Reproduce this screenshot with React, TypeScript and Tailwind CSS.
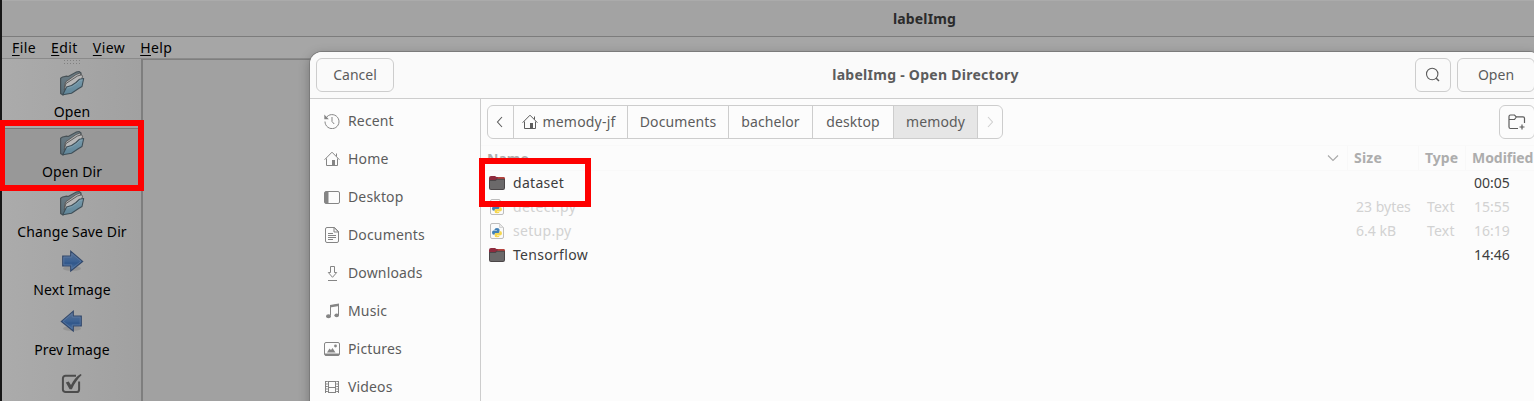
import type { ReactNode } from "react";

function Folder3D() {
  return (
    <svg width="26" height="26" viewBox="0 0 26 26" className="block">
      <defs>
        <linearGradient id="fback" x1="0" y1="0" x2="0" y2="1">
          <stop offset="0" stopColor="#6f7f87" />
          <stop offset="1" stopColor="#566b76" />
        </linearGradient>
        <linearGradient id="ffront" x1="0" y1="0" x2="0" y2="1">
          <stop offset="0" stopColor="#789aab" />
          <stop offset="1" stopColor="#5f8598" />
        </linearGradient>
      </defs>
      <path d="M1.600 23.500V8.200l2-1.200 4-.800 1.600.300L17 2.200l3-.700L22 3v10L4 25z" fill="url(#fback)" stroke="#485257" strokeWidth="1.200" strokeLinejoin="round" />
      <path d="M5.500 17l1-5L17 4.500l3.500-1.300 1.300 1-2.300 8z" fill="#b2b2b2" stroke="#555" strokeWidth=".9" />
      <path d="M5 20l2-6.500L18.500 6l4-1.200 1 1.400-1.500 6z" fill="#b8b8b8" stroke="#555" strokeWidth=".9" />
      <path d="M3.800 24.800L7.500 17l5-1.500 4.500-3 3.500-3.300 4.200-.700-1.700 8-3 1.800-7.500 4.900z" fill="url(#ffront)" stroke="#3f4f58" strokeWidth="1.100" strokeLinejoin="round" />
      <path d="M8.300 18l5-1.500 4.300-3 3.400-3.200 2.500-.400" fill="none" stroke="#8ca9b6" strokeWidth=".6" />
    </svg>
  );
}

function Arrow({ back }: { back?: boolean }) {
  return (
    <svg width="26" height="26" viewBox="0 0 26 26" className="block">
      <defs>
        <linearGradient id="arr" x1="0" y1="0" x2="0" y2="1">
          <stop offset="0" stopColor="#5a7090" />
          <stop offset=".5" stopColor="#3c6294" />
          <stop offset=".6" stopColor="#31578a" />
          <stop offset="1" stopColor="#4b76a8" />
        </linearGradient>
      </defs>
      <ellipse cx="13" cy="20.5" rx="9" ry="2.3" fill="#949494" />
      <g transform={back ? "matrix(-1 0 0 1 26 0)" : undefined}>
        <path d="M3.700 8h8V3.200L23.700 13.400 11.700 23v-5h-8z" fill="url(#arr)" stroke="#34496b" strokeWidth="1.100" />
        <path d="M4.800 9.100h8V5.600l9.200 7.800-9.200 7.200v-3.700h-8z" fill="none" stroke="#6480a6" strokeWidth=".6" />
      </g>
    </svg>
  );
}

function CheckIcon() {
  return (
    <svg width="26" height="26" viewBox="0 0 26 26" className="block">
      <path d="M17 4.800H6.500a2.600 2.600 0 0 0-2.600 2.600v11a2.600 2.600 0 0 0 2.600 2.600h11a2.600 2.600 0 0 0 2.600-2.600v-8" fill="none" stroke="#4c4c4c" strokeWidth="2" />
      <path d="M6.800 11.500l2.900-1 2.300 3.500C14.500 9 17.500 5.500 21.500 3l1.200 1.100C18.500 8 15.500 12.500 12.900 18.300h-2.300z" fill="#4c4c4c" />
    </svg>
  );
}

function ToolButton({ icon, label, size }: { icon: ReactNode; label: string; size: string }) {
  return (
    <div className={`flex w-full shrink-0 flex-col items-center ${size}`}>
      {icon}
      <div className="mt-[6px] h-5 whitespace-nowrap leading-5 tracking-[0.1px]">{label}</div>
    </div>
  );
}

function HomeIcon({ color }: { color: string }) {
  return (
    <svg width="16" height="16" viewBox="0 0 16 16" fill="none" stroke={color} className="block shrink-0">
      <path d="M.6 8.700L8 1.200l7.400 7.500M2.500 7.500v7h11v-7" />
      <path d="M12.500 2.500v3" />
      <path d="M8 14.500V9h3v5.500z" fill={color} stroke="none" />
    </svg>
  );
}

const G = "#858585";

const icons: Record<string, ReactNode> = {
  Recent: (
    <>
      <path d="M2 5A7 7 0 1 1 1 8.500" />
      <path d="M8 4v4.500l2.200 2.500" />
      <path d="M.3 1.500v4.800h4.500z" fill={G} stroke="none" />
    </>
  ),
  Desktop: (
    <>
      <rect x=".5" y="2.500" width="15" height="12" rx="1.500" />
      <path d="M1 3h3.500v11H1z" fill={G} stroke="none" />
    </>
  ),
  Documents: (
    <>
      <path d="M3 .5h7.500l4 4v9.500a1.500 1.500 0 0 1-1.500 1.500H3A1.500 1.500 0 0 1 1.500 14V2A1.500 1.500 0 0 1 3 .5z" />
      <path d="M10 .5V5h4.500zM4 6.500h5M4 8.500h8M4 10.500h8M4 12.500h5" />
    </>
  ),
  Downloads: <path d="M6.500 1.500h4v6h2.200L8.500 12.300 4.300 7.500h2.200zM4 15.500h9" />,
  Music: (
    <>
      <path d="M6.500 12.500V3l8-1.500v10.500" />
      <path d="M6 2l9-1.500V3L6 4.500z" fill={G} stroke="none" />
      <ellipse cx="4.500" cy="13.300" rx="2.500" ry="2" fill={G} stroke="none" />
      <ellipse cx="12.700" cy="12.300" rx="2.300" ry="1.900" fill={G} stroke="none" />
    </>
  ),
  Pictures: (
    <>
      <rect x=".5" y="1.500" width="15" height="13" rx="1.500" />
      <path d="M1 12.500h14v2H1zM3 11.500l2.500-4 1.500 1.500 1.500-2 3 4.500z" fill={G} stroke="none" />
      <circle cx="11.500" cy="5" r="1.400" fill={G} stroke="none" />
    </>
  ),
  Videos: (
    <>
      <path d="M4.500 2v12M11.500 2v12M4 2.500h8M4 8.500h8M4 13.500h8" />
      <path d="M1.500 2v12M14.500 2v12" />
      <path d="M2.800 2v12M13.200 2v12" strokeWidth="2" strokeDasharray="1 1.500" />
    </>
  ),
};

const places = ["Recent", "Home", "Desktop", "Documents", "Downloads", "Music", "Pictures", "Videos"];

function PlaceRow({ name }: { name: string }) {
  return (
    <div className="flex h-[38px] shrink-0 items-center gap-2 pl-[14px]">
      {name === "Home" ? (
        <HomeIcon color={G} />
      ) : (
        <svg width="16" height="16" viewBox="0 0 16 16" fill="none" stroke={G} className="block shrink-0">
          {icons[name]}
        </svg>
      )}
      <span className="pb-[2px] tracking-[0.15px]">{name}</span>
    </div>
  );
}

function DirIcon() {
  return (
    <svg width="16" height="16" viewBox="0 0 16 16" className="block shrink-0">
      <path d="M0 3a2 2 0 0 1 2-2h4l1.500 1H14a2 2 0 0 1 2 2v8H0z" fill="#8e2b3e" />
      <path d="M9 2h5a2 2 0 0 1 2 2v1H8z" fill="#b8433c" />
      <path d="M0 5.500Q0 5 .7 5h5.500l1.500-1.200H15a1 1 0 0 1 1 1V13a2 2 0 0 1-2 2H2a2 2 0 0 1-2-2z" fill="#4b4648" />
      <path d="M1 6h5.500L8 4.800h7V13a1 1 0 0 1-1 1H2a1 1 0 0 1-1-1z" fill="#6b696a" />
    </svg>
  );
}

function PyIcon() {
  return (
    <svg width="16" height="16" viewBox="0 0 16 16" className="block shrink-0">
      <path d="M3 .5h7.500l4 4V14a1.500 1.500 0 0 1-1.500 1.500H3A1.500 1.500 0 0 1 1.500 14V2A1.500 1.500 0 0 1 3 .5z" fill="#fafafa" stroke="#bdbdbd" />
      <path d="M10.500.5v4h4z" fill="#e8e8e8" stroke="#c8c8c8" strokeWidth=".7" />
      <path d="M5.500 6.500Q5.500 5 8 5t2.500 1.500V9Q10.500 10 9.500 10H7Q5.500 10 5.500 11.700 3 12 3 9.500T5.500 7.500H8V7H5.500z" fill="#4180b5" />
      <path d="M10.500 13Q10.500 14.300 8 14.300T5.700 13v-2Q5.700 10 7 10h2.500Q10.800 10 10.800 8q2.200 0 2.200 2.300T10.500 12.500H8v.5z" fill="#f6d750" />
    </svg>
  );
}

const files = [
  { name: "dataset", dir: true, size: "", type: "", time: "00:05" },
  { name: "detect.py", dir: false, size: "23 bytes", type: "Text", time: "15:55" },
  { name: "setup.py", dir: false, size: "6.4 kB", type: "Text", time: "16:19" },
  { name: "Tensorflow", dir: true, size: "", type: "", time: "14:46" },
];

function FileRow({ file }: { file: (typeof files)[number] }) {
  return (
    <div className={`flex h-6 items-center ${file.dir ? "text-[#3d3d3d]" : "text-[#d2d2d2]"}`}>
      <div className="flex w-[867px] items-center gap-2 pl-2">
        {file.dir ? <DirIcon /> : <PyIcon />}
        <span className="pb-[2px] tracking-[0.3px]">{file.name}</span>
      </div>
      <div className="w-[71px] whitespace-nowrap pb-[2px] pl-2">{file.size}</div>
      <div className="w-[47px] pb-[2px] pl-2 tracking-[0.2px]">{file.type}</div>
      <div className="pb-[2px] pl-2">{file.time}</div>
    </div>
  );
}

function Crumb({ children, size, active }: { children: ReactNode; size: string; active?: boolean }) {
  return (
    <div className={`flex items-center justify-center gap-1 border-r border-[#cdcdcd] tracking-[0.12px] ${size} ${active ? "bg-[#e6e6e6]" : ""}`}>
      {children}
    </div>
  );
}

function OpenDialog() {
  return (
    <div className="absolute left-[310px] top-[52px] flex h-[380px] w-[1231px] flex-col overflow-hidden rounded-t-[12px] bg-[#fcfcfc] text-[#5c5c5c] shadow-[0_0_0_1px_#7b7b7b,0_3px_12px_rgba(0,0,0,0.3)]">
      <div className="flex h-[47px] shrink-0 items-center justify-between border-b border-[#cdcdcd] bg-[#fafafa] px-[6px]">
        <div className="flex w-[120px]">
          <div className="flex h-[34px] w-[78px] items-center justify-center rounded-[6px] border border-[#cdcdcd] pb-[2px]">Cancel</div>
        </div>
        <div className="pb-[2px] font-bold tracking-[0.27px]">labelImg - Open Directory</div>
        <div className="flex w-[120px] gap-[6px]">
          <div className="flex h-[34px] w-9 items-center justify-center rounded-[6px] border border-[#cdcdcd]">
            <svg width="16" height="16" viewBox="0 0 16 16" fill="none" stroke="#5c5c5c" strokeWidth="1.100">
              <circle cx="7.200" cy="7" r="5.700" />
              <path d="M11 11l3 3" strokeWidth="1.500" />
            </svg>
          </div>
          <div className="flex h-[34px] w-[78px] items-center justify-center rounded-[6px] border border-[#cdcdcd] pb-[2px]">Open</div>
        </div>
      </div>
      <div className="flex min-h-0 grow">
        <div className="flex w-[171px] shrink-0 flex-col overflow-hidden border-r border-[#cdcdcd] pt-[3px]">
          {places.map((name) => (
            <PlaceRow key={name} name={name} />
          ))}
        </div>
        <div className="flex min-w-0 grow flex-col">
          <div className="flex h-[46px] shrink-0 items-center justify-between px-[6px]">
            <div className="flex h-[34px] overflow-hidden rounded-[6px] border border-[#cdcdcd]">
              <Crumb size="w-[26px] pr-[2px]">
                <svg width="8" height="12" viewBox="0 0 8 12" fill="none" stroke="#5c5c5c" strokeWidth="1.100">
                  <path d="M6 1L1.500 6 6 11" />
                </svg>
              </Crumb>
              <Crumb size="w-[114px] pr-[3px]">
                <HomeIcon color="#5c5c5c" />
                <span className="pb-[2px] tracking-[0.2px]">memody-jf</span>
              </Crumb>
              <Crumb size="w-[101px] pb-[2px]">Documents</Crumb>
              <Crumb size="w-[84px] pb-[2px]">bachelor</Crumb>
              <Crumb size="w-[81px] pb-[2px]">desktop</Crumb>
              <Crumb size="w-[84px] pb-[2px]" active>memody</Crumb>
              <div className="flex w-6 items-center justify-center">
                <svg width="8" height="12" viewBox="0 0 8 12" fill="none" stroke="#cfcfcf" strokeWidth="1.100">
                  <path d="M2 1l4.500 5L2 11" />
                </svg>
              </div>
            </div>
            <div className="flex h-[34px] w-9 items-center justify-center rounded-[6px] border border-[#cdcdcd]">
              <svg width="18" height="16" viewBox="0 0 18 16" fill="none" stroke="#5c5c5c" strokeWidth="1.200">
                <path d="M10 14.500H2.500A1.500 1.500 0 0 1 1 13V2.500A1.500 1.500 0 0 1 2.500 1h4L8.300 2.800H15a1.500 1.500 0 0 1 1.500 1.500V9M1 5.500h5.500L8.300 3M14 10.500v5M11.500 13h5" />
              </svg>
            </div>
          </div>
          <div className="flex h-[26px] shrink-0 items-center border-y border-[#f9f9f9] font-bold text-[#adadad]">
            <div className="flex h-full w-[867px] items-center justify-between border-r border-[#f8f8f8] pl-[6px] pr-2">
              <span>Name</span>
              <svg width="12" height="8" viewBox="0 0 12 8" fill="none" stroke="#a8a8a8" strokeWidth="1.100">
                <path d="M1 1.500l5 5 5-5" />
              </svg>
            </div>
            <div className="h-full w-[71px] border-r border-[#f8f8f8] pl-[6px] leading-6 tracking-[0.2px]">Size</div>
            <div className="h-full w-[47px] border-r border-[#f8f8f8] pl-[6px] leading-6">Type</div>
            <div className="pl-[6px] leading-6 tracking-[-0.05px]">Modified</div>
          </div>
          {files.map((file) => (
            <FileRow key={file.name} file={file} />
          ))}
        </div>
      </div>
    </div>
  );
}

export default function App() {
  return (
    <div className="relative flex h-[401px] w-[1534px] overflow-hidden bg-[#161616] pl-[2px] font-['Noto_Sans','Open_Sans',sans-serif] text-[14px] text-black">
      <div className="flex min-w-0 grow flex-col overflow-hidden bg-[#a1a1a1]">
        <div className="flex h-[37px] w-[1845px] shrink-0 items-center justify-center border-b border-t border-b-[#7c7c7c] border-t-[#ababab] bg-[#a3a3a3] font-bold tracking-[0.15px] text-[#2b2b2b]">
          labelImg
        </div>
        <div className="flex h-[22px] shrink-0 items-center gap-[15px] border-b border-[#8a8a8a] bg-[#a6a6a6] pl-[10px] tracking-[0.42px]">
          {["File", "Edit", "View", "Help"].map((m) => (
            <span key={m} className="leading-5">
              <span className="underline decoration-1 underline-offset-2">{m[0]}</span>
              {m.slice(1)}
            </span>
          ))}
        </div>
        <div className="flex min-h-0 grow">
          <div className="flex w-[141px] shrink-0 flex-col items-center overflow-hidden border-r-2 border-[#7e7e7e] bg-linear-to-r from-[#ababab] to-[#a1a1a1] pl-px">
            <svg width="18" height="6" viewBox="0 0 18 6" className="mb-1 mt-[1px] block shrink-0">
              <path d="M1 .5h17M1 3.500h17" stroke="#808080" strokeWidth="1" strokeDasharray="1 2" />
            </svg>
            <ToolButton size="h-[58px]" icon={<Folder3D />} label="Open" />
            <div className="flex w-full shrink-0 flex-col border-t border-[#777] bg-[#989898] pt-px">
              <ToolButton size="h-[60px]" icon={<Folder3D />} label="Open Dir" />
            </div>
            <ToolButton size="h-[58px]" icon={<Folder3D />} label="Change Save Dir" />
            <ToolButton size="h-[60px]" icon={<Arrow />} label="Next Image" />
            <ToolButton size="h-[63px]" icon={<Arrow back />} label="Prev Image" />
            <CheckIcon />
          </div>
          <div className="grow border-t border-[#7e7e7e]" />
        </div>
      </div>
      <OpenDialog />
      <div className="absolute left-0 top-[120px] h-[71px] w-[144px] border-y-[6px] border-l-[5px] border-r-[6px] border-[#fe0000]" />
      <div className="absolute left-[479px] top-[158px] h-[49px] w-[112px] border-[6px] border-[#fe0000]" />
    </div>
  );
}
